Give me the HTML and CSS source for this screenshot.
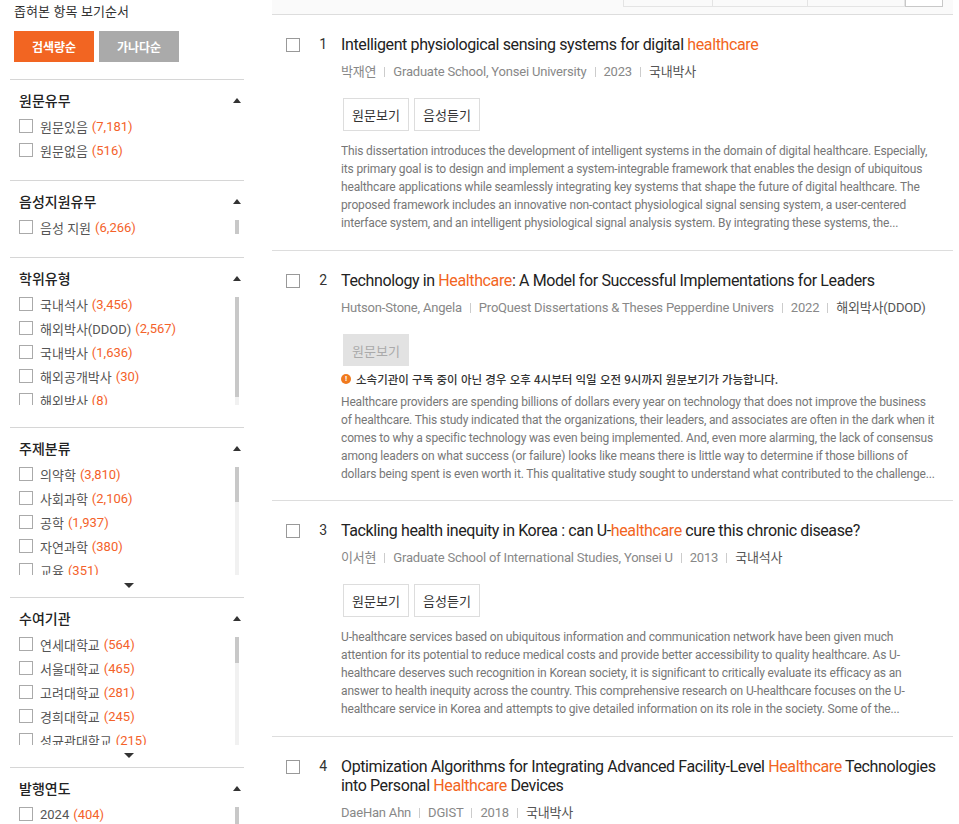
FILE: index.html
```html
<!DOCTYPE html>
<html lang="ko">
<head>
<meta charset="utf-8">
<title>검색결과</title>
<link rel="stylesheet" href="styles.css">
</head>
<body>
<div class="page">
  <aside class="sidebar">
    <div class="sort">
      <p class="sort-title">좁혀본 항목 보기순서</p>
      <div class="sort-btns">
        <span class="sort-btn on">검색량순</span>
        <span class="sort-btn">가나다순</span>
      </div>
    </div>

    <section class="facet">
      <div class="facet-head"><h3>원문유무</h3><span class="tri-up"></span></div>
      <div class="facet-body">
        <ul class="opts">
          <li class="opt"><span class="cb"></span>원문있음<span class="cnt">(7,181)</span></li>
          <li class="opt"><span class="cb"></span>원문없음<span class="cnt">(516)</span></li>
        </ul>
      </div>
    </section>

    <section class="facet">
      <div class="facet-head"><h3>음성지원유무</h3><span class="tri-up"></span></div>
      <div class="facet-body">
        <ul class="opts">
          <li class="opt"><span class="cb"></span>음성 지원<span class="cnt">(6,266)</span></li>
        </ul>
        <div class="track plain"><div class="thumb" style="height:14px"></div></div>
      </div>
    </section>

    <section class="facet scroll">
      <div class="facet-head"><h3>학위유형</h3><span class="tri-up"></span></div>
      <div class="facet-body">
        <ul class="opts">
          <li class="opt"><span class="cb"></span>국내석사<span class="cnt">(3,456)</span></li>
          <li class="opt"><span class="cb"></span>해외박사(DDOD)<span class="cnt">(2,567)</span></li>
          <li class="opt"><span class="cb"></span>국내박사<span class="cnt">(1,636)</span></li>
          <li class="opt"><span class="cb"></span>해외공개박사<span class="cnt">(30)</span></li>
          <li class="opt"><span class="cb"></span>해외박사<span class="cnt">(8)</span></li>
        </ul>
        <div class="track"><div class="thumb" style="height:100px"></div></div>
      </div>
    </section>

    <section class="facet scroll has-more">
      <div class="facet-head"><h3>주제분류</h3><span class="tri-up"></span></div>
      <div class="facet-body">
        <ul class="opts">
          <li class="opt"><span class="cb"></span>의약학<span class="cnt">(3,810)</span></li>
          <li class="opt"><span class="cb"></span>사회과학<span class="cnt">(2,106)</span></li>
          <li class="opt"><span class="cb"></span>공학<span class="cnt">(1,937)</span></li>
          <li class="opt"><span class="cb"></span>자연과학<span class="cnt">(380)</span></li>
          <li class="opt"><span class="cb"></span>교육<span class="cnt">(351)</span></li>
          <li class="opt"><span class="cb"></span>농수해양<span class="cnt">(120)</span></li>
        </ul>
        <div class="track"><div class="thumb" style="height:35px"></div></div>
      </div>
      <div class="more"><span class="tri-down"></span></div>
    </section>

    <section class="facet scroll has-more">
      <div class="facet-head"><h3>수여기관</h3><span class="tri-up"></span></div>
      <div class="facet-body">
        <ul class="opts">
          <li class="opt"><span class="cb"></span>연세대학교<span class="cnt">(564)</span></li>
          <li class="opt"><span class="cb"></span>서울대학교<span class="cnt">(465)</span></li>
          <li class="opt"><span class="cb"></span>고려대학교<span class="cnt">(281)</span></li>
          <li class="opt"><span class="cb"></span>경희대학교<span class="cnt">(245)</span></li>
          <li class="opt"><span class="cb"></span>성균관대학교<span class="cnt">(215)</span></li>
          <li class="opt"><span class="cb"></span>한양대학교<span class="cnt">(198)</span></li>
        </ul>
        <div class="track"><div class="thumb" style="height:26px"></div></div>
      </div>
      <div class="more"><span class="tri-down"></span></div>
    </section>

    <section class="facet scroll">
      <div class="facet-head"><h3>발행연도</h3><span class="tri-up"></span></div>
      <div class="facet-body">
        <ul class="opts">
          <li class="opt"><span class="cb"></span>2024<span class="cnt">(404)</span></li>
          <li class="opt"><span class="cb"></span>2023<span class="cnt">(512)</span></li>
        </ul>
        <div class="track"><div class="thumb" style="height:40px"></div></div>
      </div>
    </section>
  </aside>

  <main class="main">
    <div class="topbar">
      <span class="tb w1"></span><span class="tb w2"></span><span class="tb w3"></span><span class="tb w4"></span>
    </div>

    <article class="result">
      <span class="chk"></span>
      <span class="num">1</span>
      <div class="rbody">
        <h2 class="title">Intelligent physiological sensing systems for digital <span class="hl">healthcare</span></h2>
        <div class="meta"><span>박재연</span><i class="sep"></i><span>Graduate School, Yonsei University</span><i class="sep"></i><span>2023</span><i class="sep"></i><span class="type">국내박사</span></div>
        <div class="btns"><span class="btn">원문보기</span><span class="btn">음성듣기</span></div>
        <p class="abs">This dissertation introduces the development of intelligent systems in the domain of digital healthcare. Especially, its primary goal is to design and implement a system-integrable framework that enables the design of ubiquitous healthcare applications while seamlessly integrating key systems that shape the future of digital healthcare. The proposed framework includes an innovative non-contact physiological signal sensing system, a user-centered interface system, and an intelligent physiological signal analysis system. By integrating these systems, the...</p>
      </div>
    </article>

    <article class="result r2">
      <span class="chk"></span>
      <span class="num">2</span>
      <div class="rbody">
        <h2 class="title">Technology in <span class="hl">Healthcare</span>: A Model for Successful Implementations for Leaders</h2>
        <div class="meta"><span>Hutson-Stone, Angela</span><i class="sep"></i><span>ProQuest Dissertations &amp; Theses Pepperdine Univers</span><i class="sep"></i><span>2022</span><i class="sep"></i><span class="type">해외박사(DDOD)</span></div>
        <div class="btns"><span class="btn off">원문보기</span></div>
        <p class="notice"><span class="ico">!</span>소속기관이 구독 중이 아닌 경우 오후 4시부터 익일 오전 9시까지 원문보기가 가능합니다.</p>
        <p class="abs">Healthcare providers are spending billions of dollars every year on technology that does not improve the business of healthcare. This study indicated that the organizations, their leaders, and associates are often in the dark when it comes to why a specific technology was even being implemented. And, even more alarming, the lack of consensus among leaders on what success (or failure) looks like means there is little way to determine if those billions of dollars being spent is even worth it. This qualitative study sought to understand what contributed to the challenge...</p>
      </div>
    </article>

    <article class="result">
      <span class="chk"></span>
      <span class="num">3</span>
      <div class="rbody">
        <h2 class="title">Tackling health inequity in Korea : can U-<span class="hl">healthcare</span> cure this chronic disease?</h2>
        <div class="meta"><span>이서현</span><i class="sep"></i><span>Graduate School of International Studies, Yonsei U</span><i class="sep"></i><span>2013</span><i class="sep"></i><span class="type">국내석사</span></div>
        <div class="btns"><span class="btn">원문보기</span><span class="btn">음성듣기</span></div>
        <p class="abs">U-healthcare services based on ubiquitous information and communication network have been given much attention for its potential to reduce medical costs and provide better accessibility to quality healthcare. As U-healthcare deserves such recognition in Korean society, it is significant to critically evaluate its efficacy as an answer to health inequity across the country. This comprehensive research on U-healthcare focuses on the U-healthcare service in Korea and attempts to give detailed information on its role in the society. Some of the...</p>
      </div>
    </article>

    <article class="result">
      <span class="chk"></span>
      <span class="num">4</span>
      <div class="rbody">
        <h2 class="title">Optimization Algorithms for Integrating Advanced Facility-Level <span class="hl">Healthcare</span> Technologies into Personal <span class="hl">Healthcare</span> Devices</h2>
        <div class="meta"><span>DaeHan Ahn</span><i class="sep"></i><span>DGIST</span><i class="sep"></i><span>2018</span><i class="sep"></i><span class="type">국내박사</span></div>
      </div>
    </article>
  </main>
</div>
</body>
</html>
```
FILE: styles.css
```css
* { box-sizing: border-box; margin: 0; padding: 0; }
body {
  margin: 0;
  font-family: Roboto, "Noto Sans CJK KR", sans-serif;
  color: #333;
  background: #fff;
}
.page {
  display: flex;
  align-items: flex-start;
  gap: 28px;
  padding-left: 10px;
  width: 959px;
  height: 824px;
  overflow: hidden;
}

/* ---------- sidebar ---------- */
.sidebar { width: 234px; flex: none; }
.sort { padding: 2px 0 17px 4px; }
.sort-title {
  font-family: "Noto Sans CJK KR", sans-serif;
  font-size: 13px;
  line-height: 18px;
  color: #333;
}
.sort-btns { display: flex; gap: 5px; margin-top: 11px; }
.sort-btn {
  width: 80px;
  height: 31px;
  font: 700 12px/31px "Noto Sans CJK KR", sans-serif;
  color: #fff;
  background: #aaa;
  text-align: center;
}
.sort-btn.on { background: #f26522; }

.facet {
  border-top: 1px solid #d6d6d6;
  padding: 10px 5px 18px 9px;
}
.facet.scroll { padding-bottom: 22px; }
.facet.has-more { padding-bottom: 0; }
.facet-head {
  display: flex;
  justify-content: space-between;
  align-items: center;
  height: 20px;
}
.facet-head h3 {
  font-family: "Noto Sans CJK KR", sans-serif;
  font-size: 14px;
  font-weight: 500;
  color: #222;
}
.tri-up {
  width: 0; height: 0;
  border-left: 4.5px solid transparent;
  border-right: 4.5px solid transparent;
  border-bottom: 5px solid #333;
  margin-right: -2px;
}
.facet-body { display: flex; margin-top: 4px; }
.opts { list-style: none; flex: 1; }
.scroll .opts { height: 113px; overflow: hidden; }
.opt {
  display: flex;
  align-items: center;
  height: 24px;
  font-size: 13px;
  color: #555;
  white-space: nowrap;
}
.cb {
  width: 14px; height: 14px;
  border: 1px solid #aaa;
  background: #fff;
  margin-right: 7px;
  flex: none;
}
.cnt { color: #f4622a; margin-left: 4px; }
.track {
  width: 4px;
  background: #f1f1f1;
  margin-top: 5px;
  flex: none;
}
.track.plain { background: transparent; }
.thumb { background: #c8c8c8; }
.more {
  height: 22px;
  display: flex;
  justify-content: center;
  padding-top: 8px;
}
.tri-down {
  width: 0; height: 0;
  border-left: 5px solid transparent;
  border-right: 5px solid transparent;
  border-top: 5px solid #333;
}

/* ---------- main ---------- */
.main { width: 681px; flex: none; }
.topbar {
  height: 15px;
  background: #fafafa;
  border-bottom: 1px solid #ddd;
  display: flex;
  justify-content: flex-end;
  align-items: flex-start;
  padding-right: 10px;
}
.tb { height: 7px; border: 1px solid #e4e4e4; border-top: 0; }
.tb.w1 { width: 90px; }
.tb.w2 { width: 96px; margin-left: -1px; }
.tb.w3 { width: 98px; margin-left: -1px; }
.tb.w4 { width: 38px; border-color: #c8c8c8; background: #fff; }

.result {
  display: flex;
  align-items: flex-start;
  padding: 20px 14px 18px 14px;
  border-bottom: 1px solid #ddd;
}
.result.r2 { padding-bottom: 17px; }
.chk {
  width: 14px; height: 14px;
  border: 1px solid #999;
  background: #fff;
  margin-top: 3px;
  flex: none;
}
.num {
  width: 27px;
  text-align: right;
  font-size: 14px;
  line-height: 19px;
  color: #333;
  flex: none;
}
.rbody { margin-left: 14px; flex: 1; min-width: 0; }
.title {
  font-size: 16px;
  line-height: 19px;
  font-weight: 400;
  letter-spacing: -0.38px;
  color: #222;
}
.hl { color: #f26522; }
.meta {
  margin-top: 9px;
  display: flex;
  align-items: center;
  font-size: 13px;
  line-height: 18px;
  letter-spacing: -0.2px;
  color: #888;
  white-space: nowrap;
}
.sep { flex: none; width: 1px; height: 10px; background: #ccc; margin: 0 8px; }
.meta .type { color: #555; }
.btns { display: flex; gap: 5px; margin-top: 17px; margin-left: 2px; }
.btn {
  width: 66px;
  height: 33px;
  border: 1px solid #ddd;
  background: #fff;
  font: 13px/31px "Noto Sans CJK KR", sans-serif;
  color: #333;
  text-align: center;
}
.btn.off { height: 32px; background: #e2e2e2; border-color: #e2e2e2; color: #aaa; }
.notice {
  margin-top: 5px;
  display: flex;
  align-items: center;
  gap: 5px;
  font-family: "Noto Sans CJK KR", sans-serif;
  font-size: 11.5px;
  line-height: 16px;
  font-weight: 500;
  color: #333;
}
.ico {
  width: 10px; height: 10px;
  border-radius: 50%;
  background: #f07a1e;
  color: #fff;
  font: 700 8px/10px Roboto, sans-serif;
  text-align: center;
  flex: none;
}
.abs {
  margin-top: 11px;
  font-size: 12px;
  line-height: 18px;
  letter-spacing: -0.15px;
  color: #777;
  display: -webkit-box;
  -webkit-line-clamp: 5;
  -webkit-box-orient: vertical;
  overflow: hidden;
}
.notice + .abs { margin-top: 6px; }
```
